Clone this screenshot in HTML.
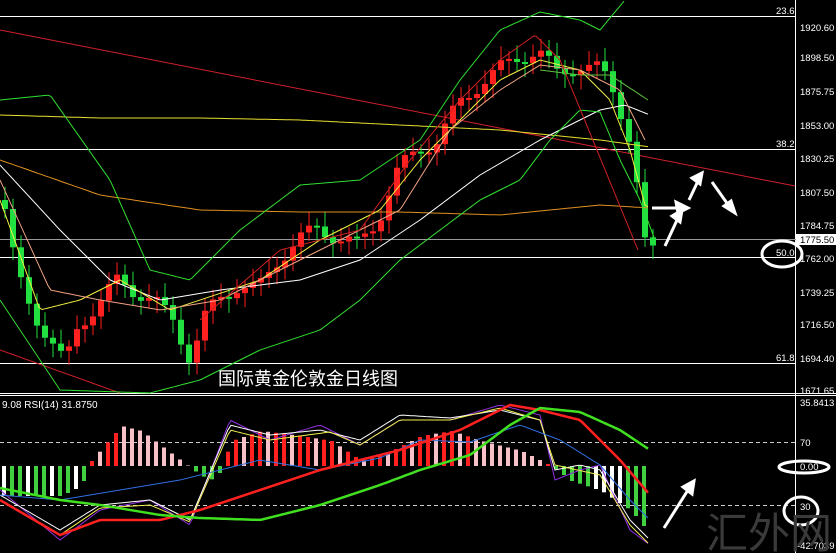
<!DOCTYPE html>
<html><head><meta charset="utf-8"><style>
html,body{margin:0;padding:0;background:#000;width:836px;height:553px;overflow:hidden}
svg{display:block}
text{font-family:"Liberation Sans","Noto Sans CJK SC",sans-serif}
</style></head><body>
<svg id="s" width="836" height="553" xmlns="http://www.w3.org/2000/svg">
<rect width="836" height="553" fill="#000"/>
<line x1="795.5" y1="0" x2="795.5" y2="553" stroke="#fff"/>
<line x1="0" y1="393.5" x2="836" y2="393.5" stroke="#fff"/>
<line x1="0" y1="395.5" x2="836" y2="395.5" stroke="#fff"/>
<g stroke="#fff" stroke-width="1">
<line x1="0" y1="16.5" x2="795" y2="16.5"/>
<line x1="0" y1="149.5" x2="795" y2="149.5"/>
<line x1="0" y1="257.5" x2="795" y2="257.5"/>
<line x1="0" y1="363.5" x2="795" y2="363.5"/>
</g>
<line x1="0" y1="239.5" x2="836" y2="239.5" stroke="#999"/>
<g fill="#fff" font-size="9.5">
<text x="776" y="14">23.6</text>
<text x="776" y="147">38.2</text>
<text x="776" y="256">50.0</text>
<text x="776" y="361">61.8</text>
</g>
<g fill="#fff" font-size="9.5" textLength="34">
<text x="800" y="31">1920.60</text>
<text x="800" y="61">1898.50</text>
<text x="800" y="95">1875.75</text>
<text x="800" y="129">1853.00</text>
<text x="800" y="162">1830.25</text>
<text x="800" y="196">1807.50</text>
<text x="800" y="229">1784.75</text>
<text x="800" y="262">1762.00</text>
<text x="800" y="296">1739.25</text>
<text x="800" y="328">1716.50</text>
<text x="800" y="362">1694.40</text>
<text x="800" y="394">1671.65</text>
<text x="800" y="406">35.8413</text>
<text x="800" y="446">70</text>
<text x="800" y="470">0.00</text>
<text x="800" y="510">30</text>
<text x="797" y="549">-42.7039</text>
</g>
<rect x="796" y="234" width="40" height="11" fill="#fff"/>
<text x="800" y="243" fill="#000" font-size="9.5">1775.50</text>
<line x1="0" y1="30" x2="795" y2="186" stroke="#d0202a"/>
<line x1="0" y1="350" x2="120" y2="393" stroke="#d0202a"/>
<g id="main"></g>
<text x="218" y="385" fill="#fff" font-size="18">国际黄金伦敦金日线图</text>
<g stroke="#ccc" stroke-dasharray="4,3">
<line x1="0" y1="442.5" x2="795" y2="442.5"/>
<line x1="0" y1="505.5" x2="795" y2="505.5"/>
</g>
<text x="2" y="408" fill="#fff" font-size="10">9.08  RSI(14) 31.8750</text>
<g id="low"></g>
<g fill="none" stroke="#fff" stroke-width="3">
<ellipse cx="782" cy="254" rx="20" ry="13"/>
<ellipse cx="804" cy="467" rx="25" ry="6"/>
<ellipse cx="801" cy="511" rx="17" ry="14"/>
</g>
<g stroke="#fff" stroke-width="3" fill="#fff">
<line x1="652" y1="208" x2="680" y2="208"/><polygon points="688,208 676,202 678,213"/>
<line x1="665" y1="246" x2="678" y2="218"/><polygon points="682,210 672,216 680,222"/>
<line x1="689" y1="200" x2="698" y2="181"/><polygon points="702,173 692,178 700,184"/>
<line x1="712" y1="182" x2="729" y2="206"/><polygon points="735,213 724,206 731,201"/>
<line x1="664" y1="528" x2="688" y2="490"/><polygon points="694,481 683,487 692,494"/>
</g>
<text x="706" y="548" fill="#3a3a3a" font-size="42" font-family="Liberation Serif,'Noto Serif CJK SC',serif">汇外网</text>
</svg>
<script>
var NS="http://www.w3.org/2000/svg";
function el(p,t,a){var e=document.createElementNS(NS,t);for(var k in a)e.setAttribute(k,a[k]);p.appendChild(e);return e;}
function interp(k,x){for(var i=0;i<k.length-1;i++){if(x<=k[i+1][0]){var t=(x-k[i][0])/(k[i+1][0]-k[i][0]);return k[i][1]+t*(k[i+1][1]-k[i][1]);}}return k[k.length-1][1];}
function line(g,k,c,w){var d="";for(var x=k[0][0];x<=k[k.length-1][0];x+=3){d+=(d?"L":"M")+x+","+interp(k,x).toFixed(1);}el(g,"path",{d:d,stroke:c,fill:"none","stroke-width":w||1});}
var m=document.getElementById("main");
var cl=[[0,200],[10,255],[20,290],[35,320],[50,345],[62,365],[75,325],[95,305],[115,280],[130,290],[150,300],[170,320],[188,360],[200,320],[215,300],[235,285],[255,290],[275,260],[295,240],[315,228],[335,238],[355,245],[375,220],[395,170],[415,150],[435,140],[455,105],[475,85],[495,70],[515,58],[535,50],[555,75],[575,65],[598,70],[610,90],[625,130],[635,190],[642,245],[648,255],[652,248]];
var prev=200;
for(var x=2;x<=652;x+=8){var c=interp(cl,x)+Math.sin(x*1.7)*8;var o=prev;var up=c<o;var col=up?"#ff2020":"#22e040";var t=Math.min(o,c),b=Math.max(o,c);if(b-t<2)b=t+2;
el(m,"line",{x1:x+3,y1:t-6-Math.abs(Math.sin(x))*8,x2:x+3,y2:b+6+Math.abs(Math.cos(x))*8,stroke:col});
el(m,"rect",{x:x,y:t,width:6,height:b-t,fill:col});prev=c;}
line(m,[[0,115],[100,118],[200,118],[300,120],[400,125],[500,130],[600,140],[650,147]],"#e8e030");
line(m,[[0,160],[100,195],[200,210],[300,212],[400,212],[500,215],[600,205],[650,208]],"#e09020");
line(m,[[0,165],[60,230],[110,280],[160,300],[220,290],[300,280],[360,260],[420,220],[480,175],[540,140],[600,110],[625,105],[650,115]],"#fff");
line(m,[[0,100],[50,95],[110,180],[150,270],[190,280],[240,230],[300,185],[360,180],[420,140],[460,80],[500,30],[540,12],[580,20],[600,30],[625,0]],"#30e030");
line(m,[[0,300],[60,390],[150,393],[200,380],[260,350],[320,330],[360,300],[400,260],[440,230],[480,200],[520,180],[550,140],[580,110],[600,112],[620,160],[640,200],[655,240]],"#30e030");
line(m,[[0,200],[40,310],[80,300],[120,280],[170,310],[200,300],[260,280],[320,240],[380,210],[420,160],[460,120],[500,80],[540,60],[580,70],[610,100],[630,150],[645,205],[650,208]],"#f0f040");
line(m,[[0,180],[50,290],[100,300],[160,310],[220,300],[280,270],[340,240],[400,210],[450,130],[500,90],[540,65],[580,70],[620,90],[645,140]],"#f0a080");
line(m,[[540,70],[580,75],[610,75],[648,100]],"#60c040");
line(m,[[200,320],[280,250],[360,230],[410,160],[460,100],[500,60],[535,35],[560,60],[640,255]],"#d02020");
var l=document.getElementById("low");
for(var x=2;x<650;x+=8){var v;var y0=466;
var H=[[0,-30],[60,-30],[80,-20],[90,5],[120,40],[140,35],[160,20],[180,5],[200,-10],[215,-15],[230,25],[260,35],[300,30],[330,25],[360,5],[390,15],[420,30],[450,35],[480,25],[520,15],[550,0],[570,-15],[600,-25],[630,-45],[650,-70]];
v=interp(H,x);var col;if(v>=0){col=(x%24<8||(x>120&&x<200)||(x>470&&x<540))?"#f8c0c8":"#ff2020";}else{col=(x%24<8&&x<120)||(x>590&&x<620)?"#fff":"#40d040";}
el(l,"rect",{x:x,y:v>=0?y0-v:y0,width:4,height:Math.abs(v),fill:col});}
line(l,[[0,490],[60,540],[100,510],[150,500],[190,525],[230,420],[270,440],[320,425],[360,445],[400,420],[450,420],[500,405],[540,415],[555,480],[580,470],[600,465],[630,530],[650,545]],"#9030e0");
line(l,[[0,495],[60,530],[100,505],[150,500],[190,520],[230,425],[270,435],[320,430],[360,440],[400,415],[450,418],[500,410],[540,420],[555,470],[580,465],[600,470],[630,520],[650,540]],"#fff");
line(l,[[0,500],[60,535],[100,508],[150,505],[190,522],[230,430],[270,440],[330,432],[360,445],[400,420],[450,420],[500,408],[540,420],[555,465],[600,475],[630,525],[650,545]],"#f0f050");
line(l,[[0,495],[60,500],[90,495],[120,490],[180,480],[220,470],[260,460],[320,470],[380,458],[420,440],[470,442],[520,425],[560,440],[600,465],[630,500],[650,520]],"#3070e0");
line(l,[[0,500],[60,535],[100,520],[160,520],[200,510],[260,490],[320,470],[400,450],[460,430],[510,405],[540,410],[580,420],[620,460],[650,495]],"#ff2020",2.5);
line(l,[[0,488],[60,500],[100,505],[160,515],[200,518],[260,520],[320,505],[380,485],[420,470],[470,455],[510,425],[540,408],[580,412],[620,430],[650,450]],"#40e020",2.5);
</script>
</body></html>
